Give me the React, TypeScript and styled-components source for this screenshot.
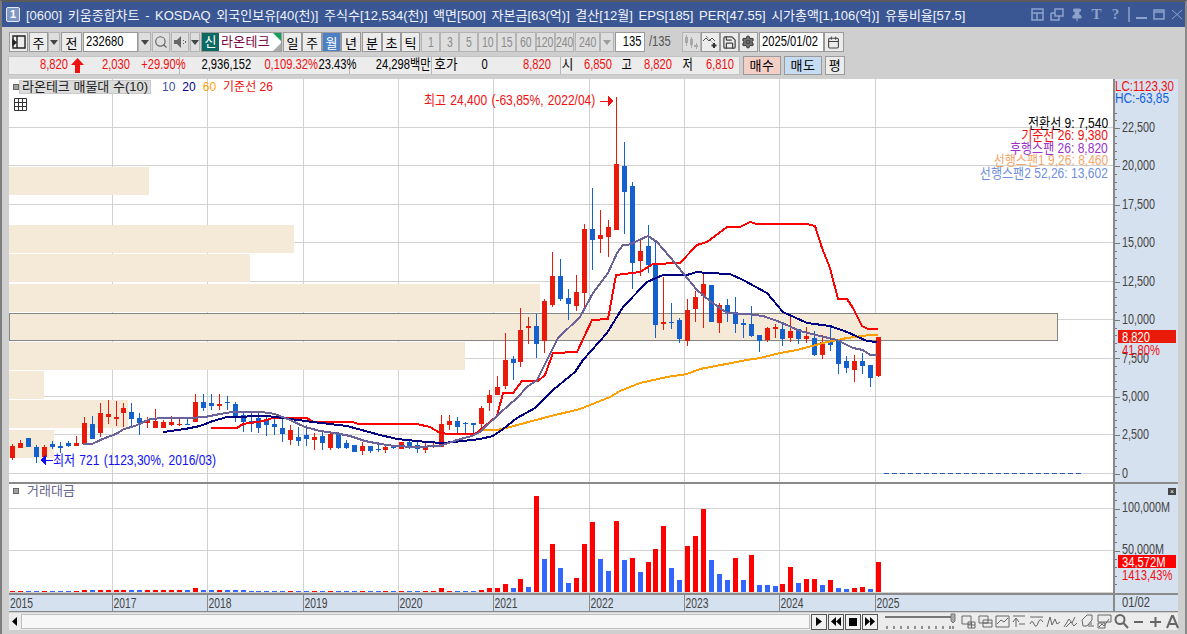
import React from "react";
import styled, {createGlobalStyle} from "styled-components";
import {Calendar, Pin, Save, Search, Settings} from "lucide-react";

const FONT = `"Liberation Sans", "Noto Sans CJK KR", sans-serif`;

const GlobalStyle = createGlobalStyle`
    html, body {
        margin: 0;
        padding: 0;
        background: #cfcfcf;
        overflow: hidden;
    }
    * {
        box-sizing: border-box;
    }
`;

// [high, body top, body bottom, low, colour], all in page pixels
const CANDLES = `444,446,458,460,r 440,443,448,448,r 438,438,447,447,b 445,447,457,463,b 445,447,457,460,r 441,444,447,449,b 442,446,448,453,b 441,443,446,447,b 436,443,446,446,r 417,423,444,444,r
416,424,439,439,b 403,413,433,437,r 400,414,417,424,r 401,417,419,426,r 403,408,413,427,r 403,412,419,427,b 413,418,423,435,b 417,420,423,428,r 409,421,428,428,r 420,422,428,428,r
416,422,425,426,r 419,424,425,426,r 419,424,425,425,b 394,402,422,422,r 394,402,408,411,b 394,403,406,410,b 394,404,406,410,r 396,402,403,410,b 402,404,418,422,b 413,415,422,432,b
412,421,424,432,b 413,418,428,433,b 417,420,425,436,b 418,424,427,435,b 418,428,434,442,b 425,430,440,445,r 427,437,441,446,b 425,435,439,446,b 433,437,440,450,r 432,436,443,450,b
432,434,448,450,r 432,434,448,449,b 440,443,448,449,b 445,445,452,452,b 442,446,451,455,r 446,446,451,453,b 442,449,450,452,b 445,447,450,453,r 445,446,448,449,b 442,442,449,449,r
439,442,447,449,b 440,445,449,453,b 442,447,450,453,r 443,446,447,448,r 415,424,447,447,r 415,421,425,430,r 417,421,427,435,b 422,423,424,434,b 423,423,425,434,b 406,408,424,430,r
390,395,403,411,r 376,387,395,395,r 333,360,386,389,r 356,359,363,380,b 308,330,362,367,r 317,326,328,344,r 314,326,344,358,b 299,301,341,353,r 252,276,305,307,r 259,276,299,301,b
289,298,304,320,b 275,292,306,311,r 224,229,293,307,r 188,229,240,270,b 210,235,239,253,r 220,227,237,257,r 97,164,230,230,r 142,166,192,234,b 182,186,263,289,b 240,251,261,276,r
225,246,265,273,b 240,263,325,338,b 277,322,324,330,r 303,322,323,329,b 318,320,339,343,b 299,310,341,346,r 291,297,309,322,r 272,284,296,328,r 285,285,322,322,b 303,305,323,333,r
299,305,314,322,b 297,312,324,333,b 319,323,325,338,b 306,324,336,337,b 335,335,341,352,b 327,328,340,342,r 324,327,329,338,r 322,329,339,346,b 316,331,338,342,r 329,329,339,344,b
327,336,339,343,r 331,338,355,356,b 335,342,355,359,r 327,342,345,351,b 340,340,364,374,b 356,361,368,373,b 355,361,370,382,r 353,361,366,374,b 365,365,378,387,b 337,337,376,377,r`
    .split(/\s+/)
    .map((c) => {
        const p = c.split(",");
        return {h: +p[0], t: +p[1], b: +p[2], l: +p[3], red: p[4] === "r"};
    });

const candleX = (i: number) => Math.round(12.3 + 7.94 * i);

// top of the later volume bars, from candle 59 onward; a trailing b means a blue bar
const VOLUME_TOPS = `590 588 588 584 588b 579 587b 496 559b 544 568b 583b 578 544 522 559b 571b 521 560b 558 572b 562 549 526 568b 580b
546 536 509 560b 574b 580b 558 580b 555 585b 585b 586b 584 567 583b 579 579 585b 580 588b 589b 588 587 589b 562`.split(/\s+/);

const LINE_MA10 = "83,444 92,444 105,438 116,434 124,429 135,426 150,419 165,418 190,418 205,417 220,414 232,412 245,412 262,412 275,414 290,420 305,427 320,431 335,433 350,436 365,441 380,444 395,446 415,447 440,446 457,440 472,436 480,432 500,413 517,398 527,387 537,380 548,358 558,338 580,317 593,293 608,273 617,253 623,245 628,245 648,236 657,242 670,257 683,273 697,290 710,301 727,313 747,314 763,316 780,322 800,331 820,336 837,340 853,348 863,350 870,355 877,355";
const LINE_MA20 = "163,432 185,429 200,426 213,421 227,417 267,416 283,418 313,422 347,426 380,435 397,439 427,442 443,443 463,441 480,439 493,436 503,429 517,418 535,408 553,390 575,372 583,360 607,333 623,307 647,282 663,275 687,275 697,272 707,273 730,274 743,280 767,293 783,312 807,323 830,326 847,332 867,341 877,342";
const LINE_BASE = "211,428 237,428 243,424 263,421 273,418 307,418 313,422 353,422 358,424 417,424 430,427 440,433 450,434 475,434 480,430 497,416 503,393 513,393 522,381 538,381 545,375 553,353 577,352 592,320 608,319 616,275 640,272 653,264 680,263 697,245 707,242 727,227 740,227 750,222 757,224 807,224 815,226 822,248 830,268 838,299 847,299 853,308 862,326 868,329 878,329";
const LINE_ORANGE = "482,430 497,430 510,427 547,417 580,409 610,397 620,391 640,383 667,377 687,374 700,369 747,360 760,358 780,353 797,350 823,343 847,338 870,335 878,335";

const PROFILE = [
    {y: 167, h: 28, r: 149}, {y: 225, h: 28, r: 294}, {y: 254, h: 28, r: 250}, {y: 284, h: 28, r: 540},
    {y: 342, h: 28, r: 465}, {y: 371, h: 28, r: 44}, {y: 400, h: 28, r: 128}, {y: 430, h: 28, r: 54},
];

const YEARS = [
    {x: 112.5, label: "2017"}, {x: 207.5, label: "2018"}, {x: 303.5, label: "2019"}, {x: 398.5, label: "2020"},
    {x: 493.5, label: "2021"}, {x: 589.5, label: "2022"}, {x: 684.5, label: "2023"}, {x: 779.5, label: "2024"},
    {x: 875.5, label: "2025"},
];

const PRICE_GRID = [
    {y: 127.5, label: "22,500", w: 33}, {y: 165.5, label: "20,000", w: 33}, {y: 204.5, label: "17,500", w: 33},
    {y: 242.5, label: "15,000", w: 33}, {y: 281.5, label: "12,500", w: 33}, {y: 319.5, label: "10,000", w: 33},
    {y: 358.5, label: "7,500", w: 27}, {y: 396.5, label: "5,000", w: 27}, {y: 434.5, label: "2,500", w: 27},
    {y: 473.5, label: "0", w: 6},
];

const Window = styled.div`
    position: relative;
    width: 1187px;
    height: 634px;
    display: flex;
    flex-direction: column;
    background: #cfcfcf;
    font-family: ${FONT};
    font-size: 12px;
    color: #000;
    overflow: hidden;
    border-top: 2px solid #5a5a5a;
    border-left: 2px solid #7c7c7c;
    border-right: 2px solid #8a8a8a;
`;

// the screen font is tall and narrow, so the text is set large and squeezed
const Narrow = styled.span<{$sx?: number; $origin?: string}>`
    display: inline-block;
    font-size: 14px;
    line-height: 14px;
    white-space: nowrap;
    transform: scaleX(${(p) => p.$sx ?? 0.8});
    transform-origin: ${(p) => p.$origin ?? "left"} center;
`;

const TitleBar = styled.div`
    height: 25px;
    flex: none;
    display: flex;
    align-items: center;
    background: #3a5794;
    color: #f0f3fa;
`;

const WindowNo = styled.div`
    width: 14px;
    height: 15px;
    margin: 0 6px 0 4px;
    border: 1px solid #e8ecf6;
    border-radius: 2px;
    background: #7f97c6;
    font-size: 11px;
    font-weight: bold;
    line-height: 13px;
    text-align: center;
    color: #fff;
`;

const TitleText = styled.div`
    flex: 1;
    font-size: 13px;
    white-space: nowrap;
    word-spacing: 2px;
`;

const TitleIcons = styled.div`
    display: flex;
    align-items: center;
    gap: 6px;
    margin-right: 2px;
    color: #8ea2cc;
`;

const TitleGlyph = styled.span`
    width: 13px;
    font-size: 15px;
    font-weight: bold;
    line-height: 15px;
    text-align: center;
    font-family: "Liberation Serif", serif;
`;

const Toolbar = styled.div`
    height: 20px;
    margin-top: 5px;
    padding-left: 7px;
    flex: none;
    display: flex;
    gap: 1px;
`;

const Group = styled.div`
    display: flex;
`;

const Btn = styled.div<{$w: number; $on?: boolean; $muted?: boolean}>`
    width: ${(p) => p.$w}px;
    height: 20px;
    flex: none;
    display: flex;
    align-items: center;
    justify-content: center;
    border: 1px solid ${(p) => (p.$muted ? "#b4b4b4" : "#9a9a9a")};
    background: ${(p) => (p.$on ? "#4c7fc4" : p.$muted ? "#dedede" : "#ececec")};
    color: ${(p) => (p.$on ? "#fff" : p.$muted ? "#8c8c8c" : "#000")};
    font-size: 13px;
    white-space: nowrap;
`;

const TextField = styled.div<{$w: number; $right?: boolean}>`
    width: ${(p) => p.$w}px;
    height: 20px;
    flex: none;
    padding: 0 2px;
    border: 1px solid #9a9a9a;
    background: #fff;
    line-height: 18px;
    text-align: ${(p) => (p.$right ? "right" : "left")};
`;

const DownArrow = styled.span<{$light?: boolean}>`
    width: 0;
    height: 0;
    border-left: 4px solid transparent;
    border-right: 4px solid transparent;
    border-top: 5px solid ${(p) => (p.$light ? "#9c9c9c" : "#444")};
`;

const NameBadge = styled.div`
    width: 81px;
    height: 20px;
    flex: none;
    display: flex;
    border: 1px solid #9a9a9a;
    background: #fff;
    position: relative;
`;

const NewMark = styled.div`
    width: 17px;
    background: #0d6a62;
    color: #fff;
    font-size: 13px;
    text-align: center;
    line-height: 18px;
`;

const StockName = styled.div`
    flex: 1;
    padding-left: 2px;
    color: #780a3e;
    font-size: 13px;
    line-height: 18px;
    letter-spacing: 0.3px;
`;

const Corner = styled.span<{$bottom?: boolean}>`
    position: absolute;
    right: 0;
    width: 0;
    height: 0;
    ${(p) => (p.$bottom
        ? "bottom: 0; border-left: 8px solid transparent; border-bottom: 8px solid #aaa;"
        : "top: 0; border-left: 8px solid transparent; border-top: 8px solid #12a05a;")}
`;

const PageCount = styled.div`
    width: 35px;
    flex: none;
    padding-left: 3px;
    line-height: 20px;
    color: #555;
`;

const InfoRow = styled.div`
    height: 19px;
    margin-top: 4px;
    padding-left: 6px;
    flex: none;
    display: flex;
    gap: 3px;
`;

const Quote = styled.div`
    width: 732px;
    height: 19px;
    display: flex;
    background: #ececec;
    border: 1px solid #c4c4c4;
`;

const Cell = styled.div<{$w: number; $red?: boolean; $sep?: boolean; $center?: boolean}>`
    width: ${(p) => p.$w}px;
    flex: none;
    line-height: 17px;
    white-space: nowrap;
    text-align: ${(p) => (p.$center ? "center" : "right")};
    color: ${(p) => (p.$red ? "#f01010" : "#000")};
    border-left: ${(p) => (p.$sep ? "1px solid #b8b8b8" : "none")};
`;

const UpArrow = styled.svg`
    width: 13px;
    height: 15px;
    margin: 1px 0 0 3px;
    display: block;
`;

const TradeBtn = styled.div<{$w: number; $bg: string}>`
    width: ${(p) => p.$w}px;
    height: 19px;
    flex: none;
    border: 1px solid #9a9a9a;
    background: ${(p) => p.$bg};
    font-size: 13px;
    line-height: 17px;
    text-align: center;
    letter-spacing: 0.5px;
`;

const ChartFrame = styled.div`
    margin-top: 4px;
    margin-left: 7px;
    width: 1169px;
    flex: none;
    display: flex;
    flex-direction: column;
    background: #fff;
`;

const PanelRow = styled.div`
    display: flex;
    position: relative;
`;

const Plot = styled.svg`
    display: block;
    flex: none;
    font-family: ${FONT};
`;

const AxisColumn = styled.svg`
    display: block;
    flex: none;
    background: #d6e1ef;
    border-left: 2px solid #8a8a8a;
    font-family: ${FONT};
`;

const PanelDivider = styled.div`
    height: 2px;
    background: #8a8a8a;
`;

const LegendBar = styled.div<{$top: number}>`
    position: absolute;
    top: ${(p) => p.$top}px;
    left: 4px;
    display: flex;
    align-items: center;
    gap: 5px;
    height: 14px;
    line-height: 14px;
    font-size: 12px;
`;

const SmallSquare = styled.span`
    width: 6px;
    height: 6px;
    margin-right: -5px;
    background: #a0a0a0;
    border: 1px solid #666;
`;

const LegendTag = styled.span`
    width: 132px;
    height: 14px;
    margin-right: 4px;
    background: #dcdcdc;
    border: 1px solid #c8c8c8;
    font-size: 13px;
    line-height: 12px;
    text-align: center;
    color: #222;
    white-space: nowrap;
`;

const LegendItem = styled.span<{$color: string}>`
    margin-left: 2px;
    color: ${(p) => p.$color};
`;

const VolumeLabel = styled.span`
    margin-left: 8px;
    color: #66668c;
    font-size: 13px;
`;

const GridToggle = styled.svg`
    position: absolute;
    top: 19px;
    left: 5px;
    width: 13px;
    height: 13px;
`;

const Note = styled.div<{$color: string; $top: number; $left: number}>`
    position: absolute;
    top: ${(p) => p.$top}px;
    left: ${(p) => p.$left}px;
    color: ${(p) => p.$color};
    line-height: 14px;
    word-spacing: 1px;
`;

const SideLegend = styled.div`
    position: absolute;
    top: 38px;
    right: 70px;
    display: flex;
    flex-direction: column;
    align-items: flex-end;
`;

const SideLine = styled(Narrow)<{$color: string}>`
    color: ${(p) => p.$color};
    line-height: 12.4px;
`;

const PriceTag = styled.div<{$top: number; $bg: string}>`
    position: absolute;
    top: ${(p) => p.$top}px;
    left: 1109px;
    width: 58px;
    height: 13px;
    padding-left: 4px;
    background: ${(p) => p.$bg};
    color: #fff;
    line-height: 13px;
`;

const TagNote = styled.div<{$top: number}>`
    position: absolute;
    top: ${(p) => p.$top}px;
    left: 1113px;
    color: #f01010;
    line-height: 13px;
`;

const CloseChip = styled.div`
    position: absolute;
    top: 4px;
    left: 1159px;
    width: 8px;
    height: 7px;
    background: #444;
    color: #fff;
    font-size: 7px;
    line-height: 7px;
    text-align: center;
`;

const TimeAxis = styled.div`
    height: 19px;
    display: flex;
    background: #d6e1ef;
    border-top: 2px solid #8a8a8a;
    border-bottom: 1px solid #8a8a8a;
`;

const TimeEnd = styled.div`
    width: 65px;
    padding-left: 7px;
    border-left: 2px solid #8a8a8a;
    line-height: 16px;
    color: #444;
`;

const ScrollRow = styled.div`
    height: 17px;
    margin-top: 1px;
    margin-left: 7px;
    width: 1169px;
    flex: none;
    display: flex;
    align-items: center;
    background: #ececec;
`;

const ScrollEnd = styled.div`
    width: 12px;
    height: 17px;
    display: flex;
    align-items: center;
    justify-content: center;
    flex: none;
`;

const ScrollThumb = styled.div`
    width: 789px;
    height: 15px;
    flex: none;
    background: #f7f7f7;
    border: 1px solid #bdbdbd;
`;

const PlayBtn = styled.div`
    width: 16px;
    height: 16px;
    margin-left: 1px;
    flex: none;
    display: flex;
    align-items: center;
    justify-content: center;
    border: 1px solid #555;
    background: #f2f2f2;
    color: #000;
`;

const SpeedSlider = styled.svg`
    width: 72px;
    height: 17px;
    margin: 0 5px 0 6px;
    flex: none;
`;

const ToolIcon = styled.svg`
    width: 15px;
    height: 15px;
    margin-right: 2px;
    flex: none;
    color: #666;
`;

const AxisText = styled.text`
    font-size: 14px;
    shape-rendering: auto;
`;

const PriceChart = () => (
    <Plot width={1104} height={403} viewBox="9 79 1104 403" shapeRendering="crispEdges">
        {PRICE_GRID.map((g) => (
            <line key={g.y} x1={9} x2={1113} y1={g.y} y2={g.y} stroke="#d2d2d2"/>
        ))}
        {YEARS.map((g) => (
            <line key={g.x} x1={g.x} x2={g.x} y1={79} y2={482} stroke="#d2d2d2"/>
        ))}
        {PROFILE.map((p) => (
            <rect key={p.y} x={9} y={p.y} width={p.r - 9} height={p.h} fill="#f5e9d8"/>
        ))}
        <rect x={9} y={313} width={1048} height={28} fill="#f5e9d8"/>
        <rect x={9} y={313.5} width={1048} height={27} fill="none" stroke="#858585"/>
        <line x1={884} x2={1082} y1={473.5} y2={473.5} stroke="#2a5cae" strokeDasharray="5 3"/>
        {CANDLES.map((c, i) => {
            const x = candleX(i);
            const color = c.red ? "#ea1a0a" : "#1460cc";
            return (
                <g key={i}>
                    <rect x={x} y={c.h} width={1} height={c.l - c.h} fill={color}/>
                    <rect x={x - 2} y={c.t} width={5} height={Math.max(c.b - c.t, 1)} fill={color}/>
                </g>
            );
        })}
        <polyline points={LINE_ORANGE} fill="none" stroke="#ffa000" strokeWidth={2}/>
        <polyline points={LINE_BASE} fill="none" stroke="#ff0000" strokeWidth={2}/>
        <polyline points={LINE_MA20} fill="none" stroke="#000080" strokeWidth={2}/>
        <polyline points={LINE_MA10} fill="none" stroke="#6a6298" strokeWidth={2}/>
        <path d="M600 101H610" stroke="#f01010"/>
        <path d="M608 96L614 101L608 106Z" fill="#f01010"/>
        <path d="M53 460H43" stroke="#1010f0"/>
        <path d="M46 455L40 460L46 465Z" fill="#1010f0"/>
    </Plot>
);

const PriceAxis = () => {
    const minor = Array.from({length: 50}, (_, i) => 473.5 - i * 7.68);
    return (
        <AxisColumn width={65} height={403} viewBox="1115 79 63 403" shapeRendering="crispEdges">
            {minor.map((y, i) => y > 110 && (
                <line key={y} x1={1115} x2={i % 5 === 0 ? 1120 : 1117} y1={Math.round(y) + 0.5} y2={Math.round(y) + 0.5} stroke="#777"/>
            ))}
            {PRICE_GRID.map((g) => (
                <AxisText key={g.y} x={1122} y={g.y + 4} textLength={g.w} lengthAdjust="spacingAndGlyphs" fill="#444">{g.label}</AxisText>
            ))}
            <AxisText x={1115} y={91} textLength={59} lengthAdjust="spacingAndGlyphs" fill="#f01010">LC:1123,30</AxisText>
            <AxisText x={1115} y={103} textLength={54} lengthAdjust="spacingAndGlyphs" fill="#1060e0">HC:-63,85</AxisText>
        </AxisColumn>
    );
};

const VolumeChart = () => (
    <Plot width={1104} height={109} viewBox="9 484 1104 109" shapeRendering="crispEdges">
        <line x1={9} x2={1113} y1={508.5} y2={508.5} stroke="#d2d2d2"/>
        <line x1={9} x2={1113} y1={550.5} y2={550.5} stroke="#d2d2d2"/>
        <line x1={9} x2={1113} y1={592.5} y2={592.5} stroke="#d2d2d2"/>
        {YEARS.map((g) => (
            <line key={g.x} x1={g.x} x2={g.x} y1={484} y2={593} stroke="#d2d2d2"/>
        ))}
        {CANDLES.slice(0, 59).map((c, i) => {
            const h = i === 23 || i === 54 ? 4 : i > 8 && i < 30 ? 2 : 1;
            return <rect key={i} x={candleX(i) - 2} y={592 - h} width={5} height={h} fill={c.red ? "#ff0000" : "#3366ff"}/>;
        })}
        {VOLUME_TOPS.map((v, i) => {
            const top = parseInt(v, 10);
            return (
                <rect key={i} x={candleX(i + 59) - 2} y={top} width={5} height={592 - top}
                      fill={v.endsWith("b") ? "#3366ff" : "#ff0000"}/>
            );
        })}
    </Plot>
);

const VolumeAxis = () => {
    const minor = Array.from({length: 15}, (_, i) => 592.5 - i * 8.4);
    return (
        <AxisColumn width={65} height={109} viewBox="1115 484 63 109" shapeRendering="crispEdges">
            {minor.map((y, i) => (
                <line key={y} x1={1115} x2={i % 5 === 0 ? 1120 : 1117} y1={Math.round(y) + 0.5} y2={Math.round(y) + 0.5} stroke="#777"/>
            ))}
            <AxisText x={1122} y={512} textLength={48} lengthAdjust="spacingAndGlyphs" fill="#444">100,000M</AxisText>
            <AxisText x={1122} y={554} textLength={42} lengthAdjust="spacingAndGlyphs" fill="#444">50,000M</AxisText>
        </AxisColumn>
    );
};

const YearStrip = () => (
    <Plot width={1104} height={16} viewBox="9 0 1104 16">
        <AxisText x={10} y={13} textLength={23} lengthAdjust="spacingAndGlyphs" fill="#444">2015</AxisText>
        {YEARS.map((g) => (
            <g key={g.x}>
                <line x1={g.x} x2={g.x} y1={0} y2={16} stroke="#8a8a8a" shapeRendering="crispEdges"/>
                <AxisText x={g.x + 1} y={13} textLength={23} lengthAdjust="spacingAndGlyphs" fill="#444">{g.label}</AxisText>
            </g>
        ))}
    </Plot>
);

const TOOL_PATHS = [
    "M1 2H10V10H1ZM7 8H14V14H7ZM7 11H14M10.5 8V14",
    "M1 2H10V9H1ZM5 6H14V13H5ZM5 9H14",
    "M1 2H14M1 13H14M1 2V13M14 2V13M2 10L6 6L9 8L13 4",
    "M1 2H13M4 13V5M1 8L4 4L7 8M7 10H13",
    "M1 3H14M1 10Q3 5 5 10T9 9T14 8",
    "M1 13L4 3L6 11L9 5L11 10L14 8",
    "M1 13L6 5L9 9L12 3M3 13L8 8L11 12L14 9",
    "M2 6L7 1H12V6L7 12H3ZM9 13V10M11 13V8M13 13V11",
    "M1 1H14V8H1ZM1 14V9H8V14ZM2 13L5 10L7 12L12 5",
    "M6 1A4.5 4.5 0 1 1 6 10A4.5 4.5 0 1 1 6 1M9.5 9L14 14",
    "M3 8H12",
    "M2 8H13M7.5 3V13",
    "M2 14L7 2H8L13 14M4 10H11",
];

const QuoteValue: React.FC<{w: number; red?: boolean; sep?: boolean; center?: boolean; text: string}> = ({w, red, sep, center, text}) => (
    <Cell $w={w} $red={red} $sep={sep} $center={center}>
        <Narrow $origin={center ? "center" : "right"} $sx={center ? 0.9 : 0.8}>{text}</Narrow>
    </Cell>
);

const App: React.FC = () => {
    return (
        <Window>
            <GlobalStyle/>
            <TitleBar>
                <WindowNo>1</WindowNo>
                <TitleText>
                    [0600] 키움종합차트 - KOSDAQ 외국인보유[40(천)] 주식수[12,534(천)] 액면[500] 자본금[63(억)] 결산[12월] EPS[185] PER[47.55] 시가총액[1,106(억)] 유통비율[57.5]
                </TitleText>
                <TitleIcons>
                    <svg width="13" height="13" viewBox="0 0 13 13" fill="none" stroke="currentColor" strokeWidth="1.5">
                        <path d="M1 1H12V12H1ZM1 5H12M6 5V12"/>
                    </svg>
                    <svg width="14" height="13" viewBox="0 0 14 13" fill="none" stroke="currentColor" strokeWidth="1.5">
                        <path d="M5 1H13V8H5ZM1 5H5M1 5V12H9V8"/>
                    </svg>
                    <Pin size={14} fill="currentColor"/>
                    <TitleGlyph>T</TitleGlyph>
                    <TitleGlyph>?</TitleGlyph>
                    <svg width="2" height="17" viewBox="0 0 2 17" fill="none" stroke="currentColor" strokeWidth="1.5">
                        <path d="M1 1V16"/>
                    </svg>
                    <svg width="11" height="11" viewBox="0 0 11 11" fill="none" stroke="currentColor" strokeWidth="2">
                        <path d="M0 9H11"/>
                    </svg>
                    <svg width="12" height="11" viewBox="0 0 12 11" fill="none" stroke="currentColor" strokeWidth="1.5">
                        <path d="M1 1H11V10H1ZM1 3H11"/>
                    </svg>
                    <svg width="12" height="11" viewBox="0 0 12 11" fill="none" stroke="currentColor" strokeWidth="1">
                        <path d="M1 1L11 10M11 1L1 10"/>
                    </svg>
                </TitleIcons>
            </TitleBar>

            <Toolbar>
                <Btn $w={19}>
                    <svg width="14" height="14" viewBox="0 0 14 14" fill="none" stroke="#222" strokeWidth="1.4">
                        <path d="M1 1H13V13H1ZM5 1V13"/>
                        <path d="M1 5L4 7.5L1 10Z" fill="#222"/>
                    </svg>
                </Btn>
                <Group>
                    <Btn $w={19}>주</Btn>
                    <Btn $w={12} $muted><DownArrow/></Btn>
                </Group>
                <Btn $w={21}>전</Btn>
                <Group>
                    <TextField $w={55}><Narrow>232680</Narrow></TextField>
                    <Btn $w={13} $muted><DownArrow/></Btn>
                </Group>
                <Btn $w={18} $muted><Search size={14} color="#666"/></Btn>
                <Btn $w={18} $muted>
                    <svg width="13" height="12" viewBox="0 0 13 12" fill="#666">
                        <path d="M0 4H3L7 0V12L3 8H0ZM9 4H10V5H9ZM9 7H10V8H9ZM11 5H12V7H11Z"/>
                    </svg>
                </Btn>
                <Btn $w={10} $muted><DownArrow/></Btn>
                <NameBadge>
                    <NewMark>신</NewMark>
                    <StockName>라온테크</StockName>
                    <Corner/>
                    <Corner $bottom/>
                </NameBadge>
                <Group>
                    <Btn $w={19}>일</Btn>
                    <Btn $w={20}>주</Btn>
                    <Btn $w={19} $on>월</Btn>
                    <Btn $w={20}>년</Btn>
                </Group>
                <Group>
                    <Btn $w={20}>분</Btn>
                    <Btn $w={19}>초</Btn>
                    <Btn $w={19}>틱</Btn>
                </Group>
                <Group>
                    {["1", "3", "5", "10", "15", "60", "120", "240"].map((t) => (
                        <Btn key={t} $w={19.1} $muted><Narrow $origin="center" $sx={0.75}>{t}</Narrow></Btn>
                    ))}
                </Group>
                <Group>
                    <Btn $w={25} $muted><Narrow $origin="center" $sx={0.75}>240</Narrow></Btn>
                    <Btn $w={14} $muted><DownArrow $light/></Btn>
                </Group>
                <TextField $w={30} $right><Narrow $origin="right">135</Narrow></TextField>
                <PageCount><Narrow>/135</Narrow></PageCount>
                <Group>
                    <Btn $w={19} $muted>
                        <svg width="14" height="14" viewBox="0 0 14 14" fill="#a8a8a8">
                            <path d="M1 2H4V8H1ZM6 4H9V10H6ZM2 0H3V11H2ZM7 2H8V13H7ZM10 10H12V8H13V10H14V12H13V14H12V12H10Z"/>
                        </svg>
                    </Btn>
                    <Btn $w={19}>
                        <svg width="15" height="14" viewBox="0 0 15 14" fill="none" stroke="#555">
                            <path d="M0 6L3 3L6 6L9 3L12 6"/>
                            <path d="M3 1L7 5L10 8" strokeDasharray="1 1"/>
                            <path d="M11 8V13M8.5 10.5H13.5" strokeWidth="2" stroke="#333"/>
                        </svg>
                    </Btn>
                    <Btn $w={19}><Save size={15} color="#444"/></Btn>
                    <Btn $w={19}><Settings size={14} color="#444" fill="#777"/></Btn>
                </Group>
                <Group>
                    <TextField $w={65}><Narrow>2025/01/02</Narrow></TextField>
                    <Btn $w={20}><Calendar size={13} color="#444"/></Btn>
                </Group>
            </Toolbar>

            <InfoRow>
                <Quote>
                    <QuoteValue w={59} red text="8,820"/>
                    <UpArrow viewBox="0 0 13 15" fill="#f01010">
                        <path d="M6.5 0L13 7H9V15H4V7H0Z"/>
                    </UpArrow>
                    <QuoteValue w={46} red text="2,030"/>
                    <QuoteValue w={49} red text="+29.90%"/>
                    <QuoteValue w={72} sep text="2,936,152"/>
                    <QuoteValue w={58} red text="0,109.32%"/>
                    <QuoteValue w={40} text="23.43%"/>
                    <QuoteValue w={82} sep text="24,298백만"/>
                    <QuoteValue w={28} sep center text="호가"/>
                    <QuoteValue w={29} text="0"/>
                    <QuoteValue w={63} red text="8,820"/>
                    <Cell $w={9}/>
                    <QuoteValue w={14} sep center text="시"/>
                    <QuoteValue w={38} red text="6,850"/>
                    <QuoteValue w={20} text="고"/>
                    <QuoteValue w={40} red text="8,820"/>
                    <QuoteValue w={21} text="저"/>
                    <QuoteValue w={41} red text="6,810"/>
                </Quote>
                <TradeBtn $w={38} $bg="#f4cfc8">매수</TradeBtn>
                <TradeBtn $w={38} $bg="#c5dcf2">매도</TradeBtn>
                <TradeBtn $w={20} $bg="#ececec">평</TradeBtn>
            </InfoRow>

            <ChartFrame>
                <PanelRow>
                    <PriceChart/>
                    <PriceAxis/>
                    <LegendBar $top={1}>
                        <SmallSquare/>
                        <LegendTag>라온테크 매물대 수(10)</LegendTag>
                        <LegendItem $color="#3b4fa8">10</LegendItem>
                        <LegendItem $color="#000080">20</LegendItem>
                        <LegendItem $color="#ffa000">60</LegendItem>
                        <LegendItem $color="#f01010">기준선 26</LegendItem>
                    </LegendBar>
                    <GridToggle viewBox="0 0 13 13" fill="none" stroke="#333">
                        <path d="M.5.5H12.5V12.5H.5ZM.5 4.5H12.5M.5 8.5H12.5M4.5.5V12.5M8.5.5V12.5"/>
                    </GridToggle>
                    <Note $color="#f01010" $top={14} $left={415}><Narrow $sx={0.86}>최고 24,400 (-63,85%, 2022/04)</Narrow></Note>
                    <Note $color="#1010f0" $top={374} $left={44}><Narrow $sx={0.86}>최저 721 (1123,30%, 2016/03)</Narrow></Note>
                    <SideLegend>
                        <SideLine $origin="right" $sx={0.86} $color="#000">전환선 9: 7,540</SideLine>
                        <SideLine $origin="right" $sx={0.86} $color="#f01010">기준선 26: 9,380</SideLine>
                        <SideLine $origin="right" $sx={0.86} $color="#9933cc">후행스팬 26: 8,820</SideLine>
                        <SideLine $origin="right" $sx={0.86} $color="#f5a66a">선행스팬1 9,26: 8,460</SideLine>
                        <SideLine $origin="right" $sx={0.86} $color="#6f8fdc">선행스팬2 52,26: 13,602</SideLine>
                    </SideLegend>
                    <PriceTag $top={251} $bg="#ea1a0a"><Narrow>8,820</Narrow></PriceTag>
                    <TagNote $top={264}><Narrow>41,80%</Narrow></TagNote>
                </PanelRow>
                <PanelDivider/>
                <PanelRow>
                    <VolumeChart/>
                    <VolumeAxis/>
                    <LegendBar $top={0}>
                        <SmallSquare/>
                        <VolumeLabel>거래대금</VolumeLabel>
                    </LegendBar>
                    <CloseChip>×</CloseChip>
                    <PriceTag $top={71} $bg="#ff0000"><Narrow>34,572M</Narrow></PriceTag>
                    <TagNote $top={84}><Narrow>1413,43%</Narrow></TagNote>
                </PanelRow>
                <TimeAxis>
                    <YearStrip/>
                    <TimeEnd><Narrow>01/02</Narrow></TimeEnd>
                </TimeAxis>
            </ChartFrame>

            <ScrollRow>
                <ScrollEnd>
                    <svg width="6" height="9" viewBox="0 0 6 9" fill="#000"><path d="M5 0V9L0 4.5Z"/></svg>
                </ScrollEnd>
                <ScrollThumb/>
                <PlayBtn>
                    <svg width="6" height="9" viewBox="0 0 6 9" fill="#000"><path d="M0 0V9L6 4.5Z"/></svg>
                </PlayBtn>
                <PlayBtn>
                    <svg width="10" height="9" viewBox="0 0 10 9" fill="#000"><path d="M5 0V9L0 4.5ZM10 0V9L5 4.5Z"/></svg>
                </PlayBtn>
                <PlayBtn>
                    <svg width="8" height="8" viewBox="0 0 8 8" fill="#000"><path d="M0 0H8V8H0Z"/></svg>
                </PlayBtn>
                <PlayBtn>
                    <svg width="10" height="9" viewBox="0 0 10 9" fill="#000"><path d="M0 0V9L5 4.5ZM5 0V9L10 4.5Z"/></svg>
                </PlayBtn>
                <SpeedSlider viewBox="0 0 72 17" fill="none">
                    <path d="M1 4H68" stroke="#777" strokeWidth="2"/>
                    <path d="M67 1H71V8L69 10L67 8Z" fill="#aaa" stroke="#777"/>
                    <path d="M3 13V16M10 13V16M17 13V16M24 13V16M31 13V16M38 13V16M45 13V16M52 13V16M59 13V16M66 13V16M69 13V16" stroke="#333"/>
                </SpeedSlider>
                {TOOL_PATHS.map((d, i) => (
                    <ToolIcon key={d} viewBox="0 0 15 15" fill="none" stroke="currentColor" strokeWidth={i > 8 ? 2 : 1}>
                        <path d={d}/>
                    </ToolIcon>
                ))}
            </ScrollRow>
        </Window>
    );
};

export default App;
